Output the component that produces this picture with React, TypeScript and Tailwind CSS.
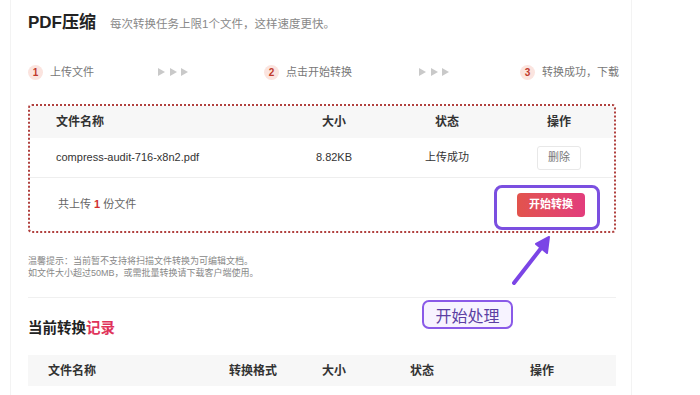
import React from 'react'

const files = [
  { name: 'compress-audit-716-x8n2.pdf', size: '8.82KB', status: '上传成功' },
]

const steps = [
  { n: 1, label: '上传文件' },
  { n: 2, label: '点击开始转换' },
  { n: 3, label: '转换成功，下载' },
]

function Arrows() {
  return (
    <div className="shrink-0 w-[30px] flex items-center justify-between text-[#c9c9c9]">
      {[0, 1, 2].map(i => (
        <svg key={i} width="7" height="8" viewBox="0 0 7 8">
          <path d="M0 0 L7 4 L0 8 Z" fill="currentColor" />
        </svg>
      ))}
    </div>
  )
}

function Step({ n, label }: { n: number; label: string }) {
  return (
    <>
      <span className="shrink-0 w-[15px] h-[15px] rounded-full bg-[#fbe4df] text-[#c0392b] text-[10px] font-bold flex items-center justify-center">{n}</span>
      <span className="ml-[7px] shrink-0">{label}</span>
    </>
  )
}

export default function App() {
  return (
    <div className="w-[700px] h-[395px] overflow-hidden bg-white font-['Liberation_Sans','Noto_Sans_CJK_SC',sans-serif] relative">
      <div className="ml-[10px] w-[622px] h-full border-x border-[#f3f3f3] pl-[17px] pr-[17px]">
        {/* Title */}
        <div className="pt-[12px] flex items-center h-[34px]">
          <h1 className="text-[17px] font-bold text-[#222] leading-[22px]">PDF压缩</h1>
          <span className="ml-[14px] text-[11.5px] text-[#888] leading-[20px] pt-[2px]">每次转换任务上限1个文件，这样速度更快。</span>
        </div>

        {/* Steps */}
        <div className="mt-[28px] w-[588px] h-[20px] flex items-center text-[11px] text-[#777] whitespace-nowrap">
          <div className="shrink-0 flex items-center w-[130px]">
            <Step {...steps[0]} />
          </div>
          <Arrows />
          <div className="shrink-0 flex items-center ml-[76px] w-[155px]">
            <Step {...steps[1]} />
          </div>
          <Arrows />
          <div className="shrink-0 flex items-center ml-[71px]">
            <Step {...steps[2]} />
          </div>
        </div>

        {/* Upload box */}
        <div className="mt-[22px] w-[588px] border-2 border-dotted border-[#b0403e] rounded-[4px] overflow-hidden">
          <div className="grid grid-cols-[248px_112px_114px_1fr] h-[32px] items-center bg-[#f7f7f7] text-[12px] font-bold text-[#333]">
            <span className="pl-[26px]">文件名称</span>
            <span className="text-center">大小</span>
            <span className="text-center">状态</span>
            <span className="text-center">操作</span>
          </div>
          {files.map(f => (
            <div key={f.name} className="grid grid-cols-[248px_112px_114px_1fr] h-[40px] items-center text-[11px] text-[#333] border-b border-[#eeeeee]">
              <span className="pl-[26px]">{f.name}</span>
              <span className="text-center">{f.size}</span>
              <span className="text-center">{f.status}</span>
              <span className="flex justify-center">
                <button className="w-[44px] h-[24px] border border-[#e8e8e8] rounded-[3px] text-[11px] text-[#777] bg-white">删除</button>
              </span>
            </div>
          ))}
          <div className="h-[53px] flex items-center justify-between pl-[28px] pr-[29px]">
            <span className="text-[11px] text-[#666]">
              共上传 <b className="text-[#d0302f]">1</b> 份文件
            </span>
            <button className="w-[68px] h-[24px] rounded-[4px] bg-gradient-to-r from-[#e2534c] to-[#e23c7c] text-white text-[11px] font-bold">
              开始转换
            </button>
          </div>
        </div>

        {/* Tips */}
        <div className="mt-[22px] text-[9px] leading-[12px] text-[#888]">
          <p>温馨提示：当前暂不支持将扫描文件转换为可编辑文档。</p>
          <p>如文件大小超过50MB，或需批量转换请下载客户端使用。</p>
        </div>

        <div className="mt-[18px] w-[588px] border-t border-[#f0f0f0]" />

        {/* Records */}
        <h2 className="mt-[20px] text-[14.5px] leading-[20px] font-bold text-[#222]">
          当前转换<span className="text-[#e0335a]">记录</span>
        </h2>
        <div className="mt-[17px] w-[588px] h-[31px] bg-[#f7f7f7] grid grid-cols-[180px_90px_72px_104px_1fr] items-center text-[12px] font-bold text-[#333]">
          <span className="pl-[20px]">文件名称</span>
          <span className="text-center">转换格式</span>
          <span className="text-center">大小</span>
          <span className="text-center">状态</span>
          <span className="text-center pr-[6px]">操作</span>
        </div>
      </div>

      {/* Annotation overlay */}
      <div className="absolute left-[494px] top-[185px] w-[106px] h-[45px] border-[3px] border-[#7b4fe0] rounded-[8px]" />
      <svg className="absolute left-0 top-0" width="700" height="395">
        <line x1="514" y1="283" x2="542" y2="247" stroke="#7b45e6" strokeWidth="4" strokeLinecap="round" />
        <path d="M549 237 L536 244 L547 253 Z" fill="#7b45e6" stroke="#7b45e6" strokeWidth="2" strokeLinejoin="round" />
      </svg>
      <div className="absolute left-[422px] top-[300px] w-[91px] h-[29px] border-2 border-[#8a5ae8] rounded-[7px] bg-[#f7f3ff] flex items-center justify-center text-[16px] text-[#5b3fa3] font-['Noto_Sans_CJK_SC',sans-serif]">
        开始处理
      </div>
    </div>
  )
}
